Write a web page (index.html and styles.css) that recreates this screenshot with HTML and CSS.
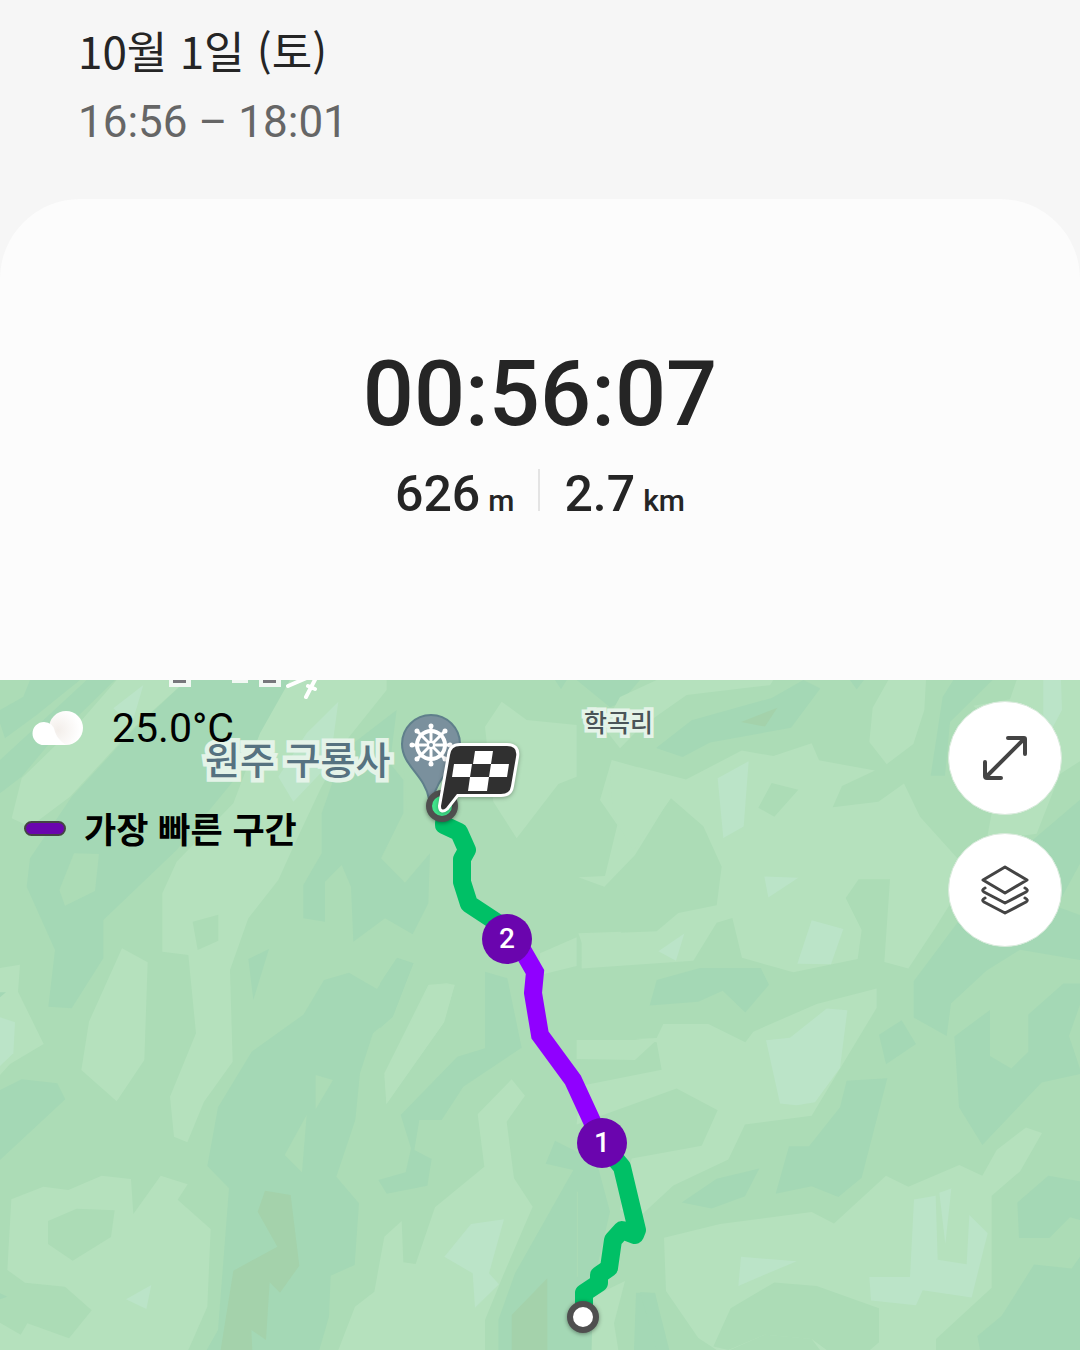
FILE: index.html
```html
<!DOCTYPE html>
<html lang="ko">
<head>
    <meta charset="UTF-8">
    <meta name="viewport" content="width=device-width, initial-scale=1.0">
    <title>10월 1일 (토)</title>
    <link rel="stylesheet" href="styles.css">
</head>
<body>
    <header class="header">
        <h1 class="date">10월 1일 (토)</h1>
        <p class="period">16:56 – 18:01</p>
    </header>

    <section class="summary">
        <div class="duration">00:56:07</div>
        <div class="stats">
            <div class="stat">626<span class="unit">m</span></div>
            <div class="divider"></div>
            <div class="stat">2.7<span class="unit">km</span></div>
        </div>
    </section>

    <main class="map">
        <svg class="map-canvas" viewBox="0 0 1080 670" preserveAspectRatio="xMidYMin slice">
            <!-- Terrain, west -->
            <g transform="scale(.33333)">
                <path class="dark" d="M90 0H240L110 105 15 175 0 130V90L70 50ZM345 0 140 200 65 290 0 340V240L120 130 260 0ZM560 0 400 150 215 350 90 535 80 620 165 810 145 980 215 985 310 835V720L530 510 760 230 870 0Z"/>
                <path class="light" d="M350 0H560L400 145 210 350 90 440 35 415 65 295 250 115ZM870 0H1160V30L1040 180 960 330 880 500 835 600 745 715 690 870 698 1145 612 1265 562 1387 522 1370 510 1250 588 1060 565 825 487 815V640L530 545 700 370 780 160Z"/>
                <path class="dark" d="M1190 90 1060 190 1000 300 965 400V520L910 615V715L975 725V605L1025 555 1053 620 1060 785 1155 715 1238 763 1285 670 1290 520 1215 608 1143 535 1210 400V300L1170 250Z"/>
                <path class="pale" d="M430 15 395 135 340 85ZM1015 65 990 250 880 365 835 290 920 160Z"/>
                <path class="base" d="M222 520 297 522 285 633 195 677 178 630ZM578 725 655 704V782L593 810Z"/>
                <path class="dark" d="M745 837 807 807 760 960Z"/>
            </g>
            <g transform="translate(0 180) scale(.33333)">
                <path class="light" d="M366 265 443 307 433 600 350 724 244 630 267 485ZM0 324 60 314 54 395 131 552 30 612 0 645ZM1285 375 1340 370 1364 375 1330 490 1159 733 1153 640Z"/>
                <path class="pale" d="M0 472 45 487 40 580 0 618Z"/>
                <path class="dark" d="M0 397H18L0 412ZM0 690 65 658 172 670 196 718 0 900ZM972 360 1047 338 1131 387 1192 293 1240 310 1178 470 1119 520 1080 640 1066 780 1009 950 1077 1030 1064 1215 992 1247 987 1370 958 1470H620L654 1410 687 985 622 918 654 742 755 575 910 464Z"/>
                <path class="base" d="M947 645 999 660 947 748ZM920 765 906 937 854 885Z"/>
                <path class="light" d="M34 1018 130 980 205 990 305 947 393 957 400 1062 482 947 563 973 533 1019 632 1107 622 1340 565 1470H0V1388L62 1424 82 1390 207 1435 275 1351 195 1280 75 1268 22 1230Z"/>
                <path class="base" d="M144 1083 230 1046 344 1051 333 1131 218 1202 144 1152Z"/>
                <path class="dark" d="M0 1300 22 1310 0 1318Z"/>
                <path class="pale" d="M378 1318 454 1275 439 1347Z"/>
                <path class="olive" d="M795 992 872 1005 898 1217 840 1298 809 1267 798 1440 754 1410 757 1470H662L700 1232 832 1160 773 1055Z"/>
            </g>

            <!-- Terrain, centre -->
            <g transform="translate(380 0) scale(.33333)">
                <path class="base" d="M70 250 160 330 80 390Z"/>
                <path class="light" d="M365 65 440 120 590 135V290L535 312 410 475 340 365 315 140ZM695 240 910 300 870 355 765 525 673 620 595 592 675 588 712 435 660 360ZM480 820 590 772V858L480 885ZM595 760 725 755 632 862ZM148 914H224L193 1025 20 1270 14 1190Z"/>
                <path class="dark" d="M525 0H560L543 28ZM590 0H780L720 70 690 82ZM50 835 100 850 38 1010 0 1045V910ZM315 875 382 895 425 1103 250 1220 185 1320H118L103 1410 155 1437 142 1517 20 1541 -5 1500 77 1477 93 1405 62 1305 232 1130 315 1105Z"/>
            </g>
            <g transform="translate(380 270) scale(.33333)">
                <path class="light" d="M395 388 435 437 380 515 402 685 458 770 370 975 315 1110V1200H-125L-75 1070 -17 1025 13 860 65 813 70 937 107 942 165 772 313 650 293 493ZM590 270H830L765 330 590 327Z"/>
                <path class="pale" d="M372 808 327 970 357 1003 285 1073 278 970 193 920 273 822Z"/>
                <path class="dark" d="M525 572 650 635 690 785 640 1000 635 1200H355V1110L405 970 580 660 497 641ZM768 1028H825L862 1200H762Z"/>
                <path class="light" d="M735 993 702 1120 715 1200H635L638 1040Z"/>
                <path class="olive" d="M502 985V1200H395V1095Z"/>
                <path class="seam" d="M592 725V980"/>
            </g>

            <!-- Terrain, east -->
            <g transform="translate(640 0) scale(.33333 .42731)">
                <path class="light" d="M-110 110-60 40 50 0H400L390 12 140 35 0 112-60 160ZM745 0H858L853 70 820 150 740 197 688 145 698 65ZM1130 0H1320V190L1260 220 1190 360 1040 375 1060 290 1225 225 1000 60 1110 45Z"/>
                <path class="light" d="M-90 210 0 205 138 233 305 165 400 178 515 148 537 188 705 212 606 248 578 298 715 285 792 242 840 320 990 450 888 577 805 675 733 660 750 466H656L617 510 665 585 653 653 460 684 306 650 277 557 230 568 160 657-175 675V595L50 588 115 545 230 527 245 437 190 342 93 277-20 400-80 320Z"/>
                <path class="light" d="M-180 950 65 912 50 848-15 840 50 838 70 805H205L316 848 340 823 530 758 710 722V767L515 1020 315 1040 265 1122 100 1183 0 1255-60 1240-25 1120 185 1090 233 1007 110 956-190 1040Z"/>
                <path class="light" d="M72 1305 240 1273 515 1245 582 1272 738 1160 805 1186 958 1135 1027 1160 1070 1100 1158 1047 1206 1060 1140 1150 1055 1207V1422L888 1542V1568H540L515 1542 375 1532 270 1568H230L175 1540 78 1430Z"/>
                <path class="base" d="M395 241 475 257 403 320 355 299ZM220 1560 272 1470 403 1410 530 1418 717 1470V1550L690 1568H560L515 1542 375 1532 265 1568Z"/>
                <path class="dark" d="M490 0 541 20 453 112 210 146 128 180 48 159 155 94 395 42ZM630 0H672L650 22ZM940 0H1058L930 98 915 224H872L908 40ZM50 702 180 674H362L387 713 316 778 248 727 175 753 29 762ZM1320 280V430L1250 530 1320 550V655L1140 631 1040 680 933 757 920 833 821 790V705L960 560 1110 420ZM785 796 828 852 738 899 717 830ZM943 834 1050 772V880L1114 909 1165 870V783L1270 710H1320V760L1287 833 1320 910V922L1205 942 1027 1088 957 1000ZM620 938 742 932 665 1165 595 1210 515 1185 407 1202 447 1091H507L600 1000ZM125 1223 230 1167 358 1143 315 1208 215 1237ZM1225 1160 1320 1173V1264L1290 1257 1228 1306H1137L1132 1223ZM1182 1368 1295 1377 1320 1350V1568H1020L1012 1535 1085 1488ZM0 1432 45 1435 88 1568H50Z"/>
                <path class="pale" d="M233 230 326 190 311 343 250 370ZM373 460 475 463 385 509ZM515 562 610 583 573 665 472 664ZM133 593 108 657 55 635ZM378 843 450 837 560 769 622 773 600 908 525 988 470 995 420 991ZM1210 0H1263L1266 70 1235 115 1210 100ZM303 1350 470 1360 295 1418ZM822 1216 887 1207 893 1357 980 1367 988 1252 1043 1295 995 1445 848 1428 828 1463 693 1452 688 1397 810 1397ZM898 1200 934 1190 916 1320Z"/>
                <path class="olive" d="M412 65 375 109 303 98Z"/>
            </g>

            <!-- Footpath and clipped place names at the top edge -->
            <path class="footpath" d="M288 6 318-7M306 17 319-8M308 6 315 9"/>
            <path class="cut-label-halo" d="M169 0H191V7H169ZM232 0H248V3H232ZM259 0H281V7H259Z"/>
            <path class="cut-label" d="M173 0H186V3H173ZM263 0H276V3H263Z"/>

            <text class="place place-temple" x="205" y="94">원주 구룡사</text>
            <text class="place place-village" x="584" y="52">학곡리</text>

            <!-- Temple pin -->
            <path class="pin" d="M431 35A29 29 0 0 0 402 64C402 86 425 95 429 119H433C437 95 460 86 460 64A29 29 0 0 0 431 35Z"/>
            <g class="wheel" transform="translate(431 65)">
                <circle r="14"/>
                <path d="M0-18V18M-18 0H18M-13-13 13 13M13-13-13 13"/>
                <circle class="wheel-hub" r="3"/>
                <path class="wheel-knobs" d="M0-19V-19M0 19V19M-19 0H-19M19 0H19M-14-14H-14M14 14H14M14-14H14M-14 14H-14"/>
            </g>

            <!-- Route -->
            <path class="route" d="M444 143V145L459 152 467 170 462 179V202L469 224 507 249"/>
            <path class="route" d="M602 463 622 487 637 550 635 555 622 550 613 560 609 588 599 595V603L584 613V637"/>
            <path class="route route-fast" d="M516 259 535 292 533 313 540 355 573 400 602 463"/>
            <circle class="stop stop-end" cx="442" cy="126" r="13"/>
            <circle class="stop" cx="583" cy="637" r="13"/>

            <!-- Kilometre markers -->
            <circle class="marker" cx="507" cy="259" r="25"/>
            <text class="marker-label" x="507" y="268">2</text>
            <circle class="marker" cx="602" cy="463" r="25"/>
            <text class="marker-label" x="602" y="472">1</text>

            <!-- Finish flag -->
            <path class="flag" d="M460 66H507Q518 66 516 77L511 106Q510 114 501 114H457L446 128Q441 132 441 126L450 75Q451 66 460 66Z"/>
            <path class="flag-check" d="M475 71H493L491 84H473ZM454 84H472L470 97H452ZM491 84H509L507 97H489ZM470 97H489L487 111H468Z"/>
        </svg>

        <div class="map-info">
            <div class="weather">
                <svg class="weather-icon" viewBox="0 0 52 36">
                    <defs>
                        <radialGradient id="cloud-shade" cx="26" cy="20" r="22" gradientUnits="userSpaceOnUse">
                            <stop offset="0" stop-color="#f3eeea"/>
                            <stop offset="1" stop-color="#ffffff"/>
                        </radialGradient>
                    </defs>
                    <circle cx="34" cy="18" r="17" fill="url(#cloud-shade)"/>
                    <path d="M12 12A11 11 0 0 1 23 22Q26 30 34 35H12A11 11 0 0 1 12 12Z" fill="#fff"/>
                </svg>
                <span>25.0°C</span>
            </div>
            <div class="legend">
                <span class="legend-line"></span>
                <span>가장 빠른 구간</span>
            </div>
        </div>

        <div class="map-buttons">
            <button class="map-button" type="button" aria-label="지도 확대">
                <svg viewBox="0 0 50 50">
                    <path d="M28 5H44Q45 5 45 6V21M44 6 6 44M5 29V43Q5 45 7 45H21"/>
                </svg>
            </button>
            <button class="map-button" type="button" aria-label="지도 유형">
                <svg class="layers-icon" viewBox="0 0 50 50">
                    <path d="M25 2 47 15 25 28 3 15ZM5 23Q1 25 4 27L25 38 46 27Q49 25 45 23M5 33Q1 35 4 37L25 48 46 37Q49 35 45 33"/>
                </svg>
            </button>
        </div>
    </main>
</body>
</html>
```

FILE: styles.css
```css
* {
    box-sizing: border-box;
}

body {
    margin: 0;
    min-height: 100vh;
    display: flex;
    flex-direction: column;
    font-family: Roboto, "Noto Sans CJK KR", sans-serif;
    background-color: #f6f6f6;
    color: #252525;
}

/* Date and time */
.header {
    padding: 20px 78px 43px;
}

.date,
.period {
    margin: 0;
    font-size: 44px;
    font-weight: 400;
}

.date {
    margin-bottom: 8px;
    font-family: "Noto Sans CJK KR", sans-serif;
    line-height: 60px;
}

.period {
    color: #666;
    line-height: 68px;
}

/* Workout summary */
.summary {
    padding: 138px 24px 150px;
    border-radius: 80px 80px 0 0;
    background-color: #fcfcfc;
    text-align: center;
}

.duration {
    font-size: 90px;
    font-weight: 500;
    line-height: 116px;
}

.stats {
    display: flex;
    justify-content: center;
    align-items: center;
    gap: 24px;
    margin-top: 5px;
}

.stat {
    font-size: 50px;
    font-weight: 500;
    line-height: 72px;
}

.unit {
    margin-left: 8px;
    font-size: 30px;
    line-height: 1;
}

.divider {
    width: 2px;
    height: 42px;
    margin-bottom: 8px;
    background-color: #e4e4e4;
}

/* Map */
.map {
    position: relative;
    flex: 1;
    min-height: 670px;
    overflow: hidden;
    background-color: #acdcb6;
}

.map-canvas {
    position: absolute;
    top: 0;
    left: 0;
    width: 100%;
    height: 100%;
}

.base {
    fill: #acdcb6;
}

.light {
    fill: #b5e1bd;
}

.dark {
    fill: #a4d8b5;
}

.pale {
    fill: #bbe4c8;
}

.olive {
    fill: #a4d2ab;
}

.seam {
    stroke: #acdcb6;
    stroke-width: 3;
}

.footpath {
    fill: none;
    stroke: #fff;
    stroke-width: 4;
    stroke-linecap: round;
}

.cut-label-halo {
    fill: #f1f8f3;
}

.cut-label {
    fill: #77777c;
}

.place {
    font-family: "Noto Sans CJK KR", sans-serif;
    font-weight: 500;
    stroke: #e4f3e8;
    stroke-linejoin: miter;
    paint-order: stroke;
}

.place-temple {
    font-size: 38px;
    fill: #567280;
    stroke-width: 9;
}

.place-village {
    font-size: 25px;
    fill: #4a5458;
    stroke-width: 7;
}

.pin {
    fill: #7a909d;
    stroke: #5f7f8b;
    stroke-width: 2;
}

.wheel {
    fill: none;
    stroke: #fff;
    stroke-width: 3;
}

.wheel circle {
    stroke-width: 4;
}

.wheel .wheel-hub {
    fill: #7a909d;
    stroke-width: 2;
}

.wheel-knobs {
    stroke-width: 5;
    stroke-linecap: round;
}

.route {
    fill: none;
    stroke: #00c066;
    stroke-width: 18;
    stroke-linecap: round;
    stroke-linejoin: round;
}

.route-fast {
    stroke: #9000ff;
    stroke-linejoin: miter;
}

.stop {
    fill: #fff;
    stroke: #4f4f4f;
    stroke-width: 6;
    filter: drop-shadow(0 1px 2px rgba(0, 0, 0, 0.4));
}

.stop-end {
    fill: #40e58c;
}

.marker {
    fill: #6a05ae;
}

.marker-label {
    font-size: 28px;
    font-weight: 500;
    fill: #fff;
    text-anchor: middle;
}

.flag {
    fill: #303030;
    stroke: #fff;
    stroke-width: 6;
    paint-order: stroke;
    filter: drop-shadow(0 1px 2px rgba(0, 0, 0, 0.3));
}

.flag-check {
    fill: #fff;
}

/* Weather and legend over the map */
.map-info {
    position: absolute;
    top: 18px;
    left: 24px;
    display: flex;
    flex-direction: column;
    gap: 40px;
    color: #000;
}

.weather {
    display: flex;
    align-items: center;
    gap: 28px;
    padding-left: 8px;
    font-size: 41px;
    line-height: 60px;
}

.weather-icon {
    width: 52px;
    height: 36px;
}

.legend {
    display: flex;
    align-items: center;
    gap: 18px;
    font-family: "Noto Sans CJK KR", sans-serif;
    font-size: 35px;
    font-weight: 700;
    line-height: 60px;
}

.legend-line {
    width: 42px;
    height: 15px;
    border: 2px solid #444;
    border-radius: 8px;
    background-color: #6a05ae;
}

/* Round map buttons */
.map-buttons {
    position: absolute;
    top: 21px;
    right: 18px;
    display: flex;
    flex-direction: column;
    gap: 18px;
}

.map-button {
    display: flex;
    justify-content: center;
    align-items: center;
    width: 114px;
    height: 114px;
    padding: 0;
    border: 1px solid #d8eadb;
    border-radius: 50%;
    background-color: #fff;
    cursor: pointer;
}

.map-button svg {
    width: 50px;
    height: 50px;
    fill: none;
    stroke: #444;
    stroke-width: 4;
    stroke-linecap: round;
    stroke-linejoin: round;
}

.map-button .layers-icon {
    stroke-width: 3;
}
```
